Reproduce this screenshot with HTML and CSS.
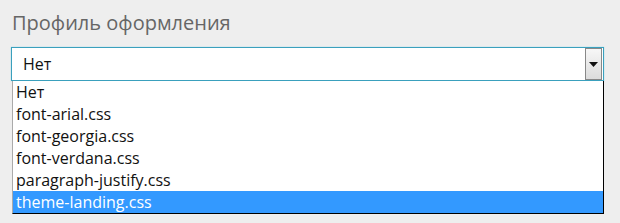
FILE: index.html
```html
<!DOCTYPE html>
<html>
<head>
<meta charset="utf-8">
<link rel="stylesheet" href="styles.css">
</head>
<body>
<div class="field">
  <div class="label">Профиль оформления</div>
  <div class="select">
    <span class="value">Нет</span>
    <span class="btn"><svg width="9" height="5" viewBox="0 0 9 5"><path d="M0 0H9L4.5 5Z" fill="#111"/></svg></span>
  </div>
  <ul class="list">
    <li>Нет</li>
    <li>font-arial.css</li>
    <li>font-georgia.css</li>
    <li>font-verdana.css</li>
    <li>paragraph-justify.css</li>
    <li class="active">theme-landing.css</li>
  </ul>
</div>
</body>
</html>
```
FILE: styles.css
```css
html, body {
  margin: 0;
  padding: 0;
  background: #eeeeee;
  font-family: "Open Sans", "Liberation Sans", sans-serif;
}
.field {
  padding: 9px 0 0 11px;
  width: 593px;
}
.label {
  font-size: 20px;
  color: #666;
  line-height: 28px;
  padding-left: 1px;
  margin-bottom: 10px;
}
.select {
  height: 32px;
  border: 1px solid #3aa0bd;
  background: #fff;
  display: flex;
  align-items: center;
  justify-content: space-between;
  box-shadow: 0 0 1px #7fd0e4;
}
.value {
  font-size: 16px;
  color: #111;
  padding-left: 11px;
}
.btn {
  width: 15px;
  height: 30px;
  margin-right: 1px;
  border: 1px solid #888;
  background: linear-gradient(#f7f7f7, #dcdcdc);
  display: flex;
  align-items: center;
  justify-content: center;
  box-sizing: content-box;
}
.list {
  list-style: none;
  margin: 0 0 0 1px;
  padding: 0;
  background: #fff;
  border-left: 1px solid #aaa;
  border-right: 1px solid #000;
  border-bottom: 1px solid #000;
}
.list li {
  font-size: 16px;
  line-height: 22px;
  height: 22px;
  color: #111;
  padding-left: 3px;
}
.list li.active {
  background: #3399ff;
  color: #fff;
}
```
